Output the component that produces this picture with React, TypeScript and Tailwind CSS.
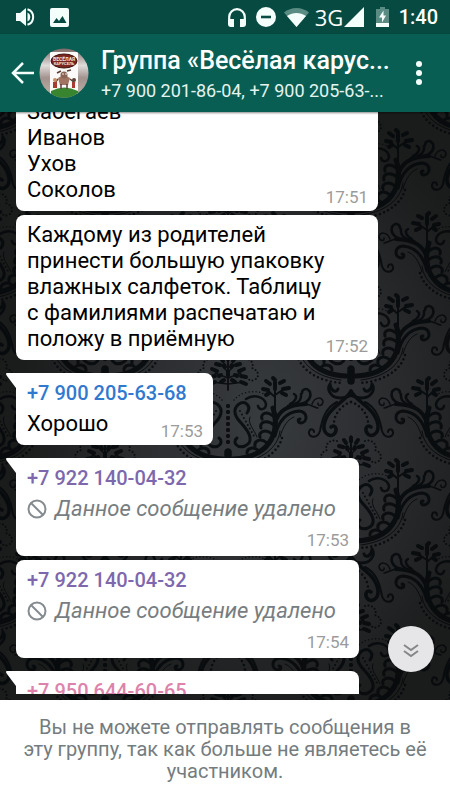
import type { ReactNode } from "react";

function DamaskHalf() {
  return (
    <g fill="none" stroke="#06090b" strokeLinecap="round" strokeLinejoin="round">
      {/* sprig */}
      <path d="M47 28 L47 -1 M47 11 L39 4 M47 9 L56 3" strokeWidth="2" />
      <path d="M47 3 L47 -4 M42 -2 L38 -5 M52 -3 L56 -5 M40 4 L35 3 M41 7 L38 9 M55 3 L61 2 M54 7 L58 9 M47 -6 L45 -8" strokeWidth="4" />
      {/* upper branch with its fronds */}
      <path d="M47 38 C50 24 60 19 78 18" strokeWidth="4" />
      <path d="M60 20 C68 19 74 15 73 8 M68 19 C78 18 84 13 82 6 C79 1 74 3 74 7 M62 18 C68 15 70 10 66 8" strokeWidth="2.500" />
      <path d="M78 18 C84 19 87 22 90 22 M84 18 C87 10 95 11 95 16 C94 21 89 20 90 17" strokeWidth="1.500" />
      {/* lower branch */}
      <path d="M47 50 C51 33 60 26 71 25 C80 26 80 36 73 37 C69 36 70 33 72 33" strokeWidth="3" />
      <path d="M52 51 C55 40 60 33 66 31" strokeWidth="1" />
      {/* body */}
      <path d="M45 22 C49 33 48 48 41 57 C34 67 22 72 5 73" strokeWidth="5" />
      <path d="M52 45 C50 62 34 74 10 77" strokeWidth="1" />
      <path d="M54 52 C49 69 30 79 8 80" strokeWidth="2.500" strokeDasharray="0 4.500" />
      <path d="M19 27 C24 20 17 14 11 18 C3 24 8 32 14 38 C22 47 26 56 17 60 C9 63 4 56 9 52" strokeWidth="3" />
      <path d="M22 31 C19 37 26 43 29 51" strokeWidth="1" />
      <path d="M18 13 C25 8 36 10 38 18 C38 24 31 25 30 20" strokeWidth="2.500" />
      <path d="M45 30 C39 24 32 28 34 33 M46 39 C39 33 31 36 33 42 M44 48 C38 42 30 46 32 51 M39 57 C33 51 26 55 27 60 M31 65 C26 60 19 62 19 67" strokeWidth="3" />
      <path d="M6 14 C12 6 28 2 40 10" strokeWidth="1.500" strokeDasharray="0 3.500" />
      <path d="M12 25 L26 50" strokeWidth="2" strokeDasharray="0 4" />
      <path d="M0 20 L0 62" strokeWidth="4" strokeDasharray="0 6" />
      {/* heart below */}
      <path d="M0 66 L0 78" strokeWidth="7" />
      <path d="M0 91 C-1 94 15 98 20 91 C23 88 23 84 21 81 C21 87 15 91 13 86" strokeWidth="3" />
      <path d="M0 88 C5 99 24 104 27 122 C28 132 19 135 16 130 C13 125 17 121 20 124" strokeWidth="3.500" />
      <path d="M14 99 C26 105 29 117 31 128 C34 137 43 134 42 129 C41 125 37 126 37 129" strokeWidth="2" />
      <path d="M0 99 C9 102 16 110 17 119" strokeWidth="2.500" strokeDasharray="0 4.500" />
      {/* crown */}
      <path d="M0 -32 L0 4 M0 -14 L8 -22 M0 -8 L13 -13 M0 -2 L16 -4" strokeWidth="1.500" />
      <path d="M0 -30 L0 -27 M5 -25 L7 -28 M8 -21 L12 -22 M3 -19 L4 -21 M11 -15 L16 -17 M7 -11 L9 -10 M13 -10 L18 -9 M13 -4 L18 -2 M4 -6 L7 -4 M0 -14 L0 -11" strokeWidth="4" />
      <path d="M14 -27 C20 -29 27 -24 24 -18 C31 -16 32 -8 26 -6 C22 -4 20 -7 21 -9" strokeWidth="2" strokeDasharray="0 3.500" />
    </g>
  );
}

function Wallpaper() {
  const motifs: [number, number][] = [];
  for (let col = -1; col < 6; col++) {
    const x = 105 + (col - 1) * 123;
    const shift = col % 2 === 0 ? -82 : 0;
    for (let row = -1; row < 5; row++) motifs.push([x, 26 + row * 165 + shift]);
  }
  return (
    <svg className="absolute inset-0 h-full w-full" viewBox="0 0 450 588" preserveAspectRatio="xMidYMid slice" aria-hidden="true">
      <defs>
        <radialGradient id="shade" cx="0.58" cy="0.52" r="0.55">
          <stop offset="0" stopColor="#383b3e" />
          <stop offset="0.55" stopColor="#292b2d" />
          <stop offset="1" stopColor="#1a1b1b" />
        </radialGradient>
        <g id="half"><DamaskHalf /></g>
      </defs>
      <rect width="450" height="588" fill="url(#shade)" />
      {motifs.map(([x, y]) => (
        <g key={`${x} ${y}`} transform={`translate(${x} ${y})`} opacity="0.85">
          <use href="#half" />
          <use href="#half" transform="scale(-1 1)" />
        </g>
      ))}
    </svg>
  );
}

function StatusBar() {
  return (
    <div className="flex h-[34px] shrink-0 items-center bg-[#064a41] pr-3 pl-4 text-white">
      <svg width="19" height="20" viewBox="0 0 19 20" fill="#f4fffc" aria-label="Звук">
        <path d="M0 6h4l6-5v18l-6-5H0z" />
        <path d="M11.500 5.500a5 5 0 0 1 0 9z" />
        <path d="M11.500 2.200a8.200 8.200 0 0 1 0 15.600" fill="none" stroke="#f4fffc" strokeWidth="2" />
      </svg>
      <svg className="ml-[15px]" width="19" height="19" viewBox="0 0 19 19" aria-label="Изображение">
        <rect width="19" height="19" rx="2" fill="#f4fffc" />
        <path d="M3 15l3.500-5 2.500 3 3.500-5 4 7z" fill="#064a41" />
      </svg>
      <div className="ml-auto flex items-center">
        <svg width="18" height="19" viewBox="0 0 18 19" aria-label="Наушники">
          <path d="M1.200 15V9a7.800 7.800 0 0 1 15.600 0v6" fill="none" stroke="#f4fffc" strokeWidth="2.200" />
          <path d="M1 11h5v8H3a3 3 0 0 1-3-3v-4zM12 11h5l1 1v4a3 3 0 0 1-3 3h-3z" fill="#f4fffc" />
        </svg>
        <svg className="ml-2.5" width="20" height="20" viewBox="0 0 20 20" aria-label="Не беспокоить">
          <circle cx="10" cy="10" r="10" fill="#f4fffc" />
          <path d="M5 10h10" stroke="#064a41" strokeWidth="2.600" />
        </svg>
        <svg className="ml-2" width="25" height="19" viewBox="0 0 25 19" aria-label="Wi-Fi">
          <path d="M0 4.500C7-1.500 18-1.500 25 4.500L12.500 19z" fill="#5a8c83" />
          <path d="M3 8C9 4 16 4 22 8L12.500 19z" fill="#f4fffc" />
        </svg>
        <span className="ml-1.5 w-[27px] font-['Open_Sans','Noto_Sans',sans-serif] text-[22px] leading-6">3G</span>
        <svg className="ml-0.5" width="20" height="20" viewBox="0 0 20 20" aria-label="Сигнал">
          <path d="M20 0v20H0z" fill="#f4fffc" />
        </svg>
        <svg className="ml-3" width="13" height="20" viewBox="0 0 13 20" aria-label="Зарядка">
          <path d="M4 0h5v2h4v14H0V2h4z" fill="#5a8c83" />
          <path d="M0 16h13v4H0z" fill="#f4fffc" />
          <path d="M7.500 3.500L3 10.500h3v5l4-7H7.500z" fill="#f4fffc" />
        </svg>
        <time className="ml-2.5 text-[20px] leading-6 font-medium">1:40</time>
      </div>
    </div>
  );
}

function Avatar() {
  return (
    <svg width="50" height="50" viewBox="0 0 50 50" role="img" aria-label="Весёлая карусель">
      <defs>
        <clipPath id="round"><circle cx="25" cy="25" r="24.500" /></clipPath>
        <linearGradient id="side" x1="0" y1="0" x2="0" y2="1">
          <stop offset="0" stopColor="#7a6562" />
          <stop offset="0.350" stopColor="#e0dcda" />
          <stop offset="0.600" stopColor="#a3928e" />
          <stop offset="1" stopColor="#bfb7a8" />
        </linearGradient>
      </defs>
      <g clipPath="url(#round)">
        <rect width="50" height="50" fill="url(#side)" />
        <rect x="11" y="4" width="28" height="42" fill="#fbfaf8" />
        <ellipse cx="25" cy="13" rx="13" ry="7" fill="#7b2420" stroke="#3e1410" />
        <text x="25" y="12.500" textAnchor="middle" fontSize="5" fontWeight="700" fill="#f4e4da">ВЕСЁЛАЯ</text>
        <text x="25" y="17" textAnchor="middle" fontSize="4" fontWeight="700" fill="#f4e4da">КАРУСЕЛЬ</text>
        <path d="M12 43q13-7 27 0v7H12z" fill="#39852f" />
        <path d="M19 30q6-5 12 0l-2 7h-8z" fill="#a07460" />
        <circle cx="25" cy="27" r="3.500" fill="#8a6557" />
        <path d="M18 25l4-2M28 23l4-1M19 31l-4 5M31 31l5 4M22 36v5M28 36v5" stroke="#5a3e37" strokeWidth="1.500" />
        <path d="M14 34h4v6h-4zM33 34h3v6h-3z" fill="#a93c30" />
        <circle cx="16" cy="32" r="2" fill="#c88e63" />
        <circle cx="35" cy="32" r="2" fill="#5d4039" />
        <circle cx="24" cy="26" r="0.800" fill="#fff" />
        <circle cx="27" cy="26" r="0.800" fill="#fff" />
      </g>
    </svg>
  );
}

function Header() {
  return (
    <header className="relative z-10 flex h-[78px] shrink-0 items-center bg-[#095e54] pl-[11px] text-white shadow-[0_1px_2px_#0007]">
      <button aria-label="Назад" className="shrink-0">
        <svg width="23" height="22" viewBox="0 0 23 22" fill="none" stroke="#f4fffc" strokeWidth="2.500">
          <path d="M23 11H2M12 1L2 11l10 10" />
        </svg>
      </button>
      <div className="ml-[5px] shrink-0"><Avatar /></div>
      <div className="ml-3 min-w-0 flex-1 pt-[3px] whitespace-nowrap">
        <h1 className="text-[25px] leading-8 font-medium">Группа «Весёлая карус...</h1>
        <p className="text-[18px] leading-7 text-[#e3f3ef]">+7 900 201-86-04, +7 900 205-63-...</p>
      </div>
      <button aria-label="Меню" className="mr-7 shrink-0">
        <svg width="6" height="24" viewBox="0 0 6 24" fill="#f4fffc">
          <circle cx="3" cy="3" r="3" /><circle cx="3" cy="12" r="3" /><circle cx="3" cy="21" r="3" />
        </svg>
      </button>
    </header>
  );
}

function Bubble({ children, tail = false, className }: { children: ReactNode; tail?: boolean; className: string }) {
  return (
    <article className={`relative shrink-0 bg-white pr-2.5 pl-[11px] ${tail ? "rounded-lg rounded-tl-none" : "rounded-lg"} ${className}`}>
      {tail && (
        <svg className="absolute top-0 -left-2.5" width="10" height="15" viewBox="0 0 10 15" fill="#fff" aria-hidden="true">
          <path d="M10 0H1Q-1 0 1 3l9 12z" />
        </svg>
      )}
      {children}
    </article>
  );
}

function Sender({ phone, color }: { phone: string; color: string }) {
  return <h2 className={`text-[20px] leading-7 font-medium ${color}`}>{phone}</h2>;
}

function Time({ value }: { value: string }) {
  return <time className="shrink-0 text-[17px] leading-5 text-[#9b9b9b]">{value}</time>;
}

function Deleted({ time }: { time: string }) {
  return (
    <>
      <p className="mt-1 flex items-center text-[22px] leading-[26px] whitespace-nowrap text-[#777d80] italic">
        <svg className="mr-2 shrink-0" width="20" height="20" viewBox="0 0 20 20" fill="none" stroke="#858b8e" strokeWidth="2" aria-hidden="true">
          <circle cx="10" cy="10" r="8.500" /><path d="M4 4l12 12" />
        </svg>
        Данное сообщение удалено
      </p>
      <div className="mt-2 flex justify-end"><Time value={time} /></div>
    </>
  );
}

export default function App() {
  return (
    <div className="flex h-screen flex-col overflow-hidden bg-white font-['Roboto','Noto_Sans',sans-serif]">
      <StatusBar />
      <Header />
      <main className="relative min-h-0 flex-1 overflow-hidden bg-[#191a1a]">
        <Wallpaper />
        <section className="relative flex h-full flex-col items-start justify-end overflow-hidden pr-4 pb-1.5 pl-4">
          <Bubble className="flex w-[362px] items-end justify-between pt-2 pb-1">
            <p className="pb-1 text-[22px] leading-[26px]">Забегаев<br />Иванов<br />Ухов<br />Соколов</p>
            <Time value="17:51" />
          </Bubble>
          <Bubble className="mt-1 flex w-[362px] items-end pt-[7px] pb-1">
            <p className="min-w-0 flex-1 pb-1 text-[22px] leading-[26px] whitespace-nowrap">
              Каждому из родителей<br />принести большую упаковку<br />влажных салфеток. Таблицу<br />с фамилиями распечатаю и<br />положу в приёмную
            </p>
            <Time value="17:52" />
          </Bubble>
          <Bubble tail className="mt-[13px] w-[197px] pt-1.5 pb-1">
            <Sender phone="+7 900 205-63-68" color="text-[#3079cf]" />
            <div className="mt-1 flex items-end justify-between">
              <p className="pb-1 text-[22px] leading-[26px]">Хорошо</p>
              <Time value="17:53" />
            </div>
          </Bubble>
          <Bubble tail className="mt-[13px] w-[343px] pt-1.5 pb-1.5">
            <Sender phone="+7 922 140-04-32" color="text-[#7d68ae]" />
            <Deleted time="17:53" />
          </Bubble>
          <Bubble className="mt-1 w-[343px] pt-1.5 pb-1.5">
            <Sender phone="+7 922 140-04-32" color="text-[#7d68ae]" />
            <Deleted time="17:54" />
          </Bubble>
          <div className="-ml-2.5 mt-[13px] h-[23px] shrink-0 overflow-hidden pl-2.5">
            <Bubble tail className="w-[343px] pt-1.5 pb-1.5">
              <Sender phone="+7 950 644-60-65" color="text-[#dd83ab]" />
            </Bubble>
          </div>
        </section>
        <button aria-label="Вниз" className="absolute right-4 bottom-7 flex size-[46px] items-center justify-center rounded-full bg-[#e6e6e8]">
          <svg className="mt-1" width="16" height="14" viewBox="0 0 16 14" fill="none" stroke="#858789" strokeWidth="2">
            <path d="M1 1l7 5 7-5M1 7l7 5 7-5" />
          </svg>
        </button>
      </main>
      <footer className="flex shrink-0 justify-center bg-white px-4 pt-4 pb-[18px]">
        <p className="text-center text-[20px] leading-[22px] text-[#747c80]">
          Вы не можете отправлять сообщения в<br />эту группу, так как больше не являетесь её<br />участником.
        </p>
      </footer>
    </div>
  );
}
